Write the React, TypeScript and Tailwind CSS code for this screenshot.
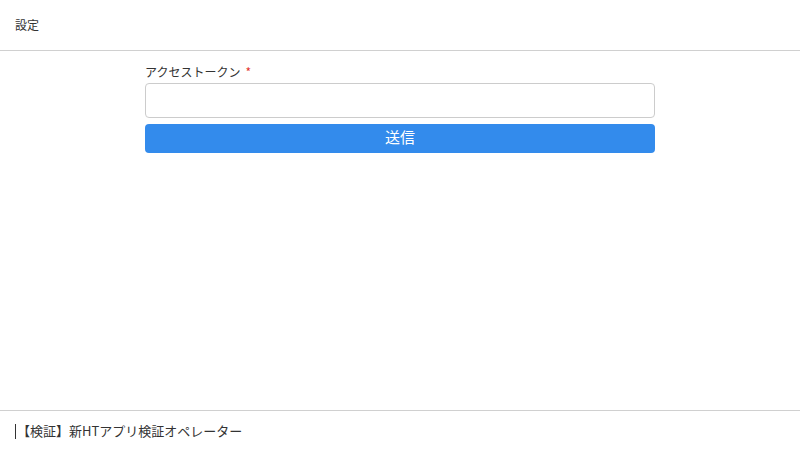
export default function App() {
  return (
    <div
      className="flex h-[451px] w-[800px] flex-col bg-white text-[#333]"
      style={{ fontFamily: '"Noto Sans CJK JP", "Noto Sans", sans-serif' }}
    >
      <header className="flex h-[51px] items-center border-b border-[#d0d0d0] px-[15px] text-[12px]">
        設定
      </header>

      <main className="flex-1">
        <div className="ml-[145px] mt-[13px] w-[510px]">
          <label className="block text-[12px] leading-[16px]">
            アクセストークン<span className="ml-[5px] text-[#e3342f]">*</span>
          </label>
          <input
            type="text"
            className="mt-[3px] block h-[35px] w-full rounded-[4px] border border-[#ccc] px-2 text-[13px] outline-none"
          />
          <button className="mt-[6px] flex h-[29px] w-full items-center justify-center rounded-[4px] bg-[#338bec] pb-[3px] text-[15px] leading-[20px] text-white">
            送信
          </button>
        </div>
      </main>

      <footer className="flex h-[41px] items-center border-t border-[#d0d0d0] px-[15px] text-[13px]">
        <span className="mr-[1px] inline-block h-[15px] w-px bg-[#333]" />
        【検証】新HTアプリ検証オペレーター
      </footer>
    </div>
  );
}
